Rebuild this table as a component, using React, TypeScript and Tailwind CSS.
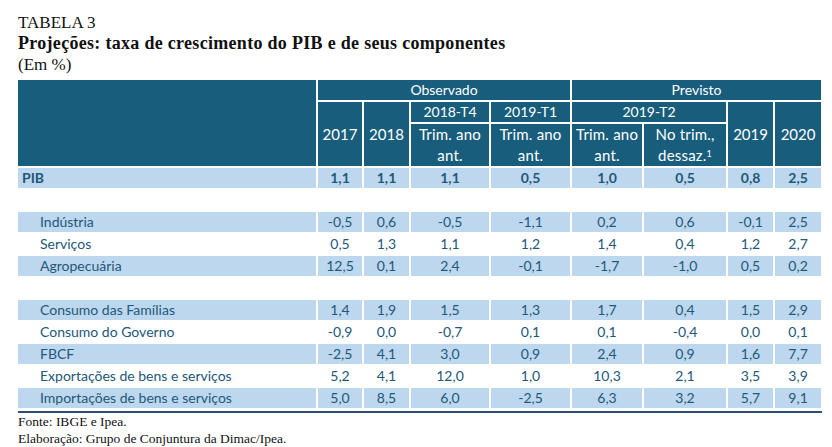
const rows = [
  { label: 'PIB', values: ['1,1', '1,1', '1,1', '0,5', '1,0', '0,5', '0,8', '2,5'], fill: true, bold: true },
  null,
  { label: 'Indústria', values: ['-0,5', '0,6', '-0,5', '-1,1', '0,2', '0,6', '-0,1', '2,5'], fill: true },
  { label: 'Serviços', values: ['0,5', '1,3', '1,1', '1,2', '1,4', '0,4', '1,2', '2,7'], fill: false },
  { label: 'Agropecuária', values: ['12,5', '0,1', '2,4', '-0,1', '-1,7', '-1,0', '0,5', '0,2'], fill: true },
  null,
  { label: 'Consumo das Famílias', values: ['1,4', '1,9', '1,5', '1,3', '1,7', '0,4', '1,5', '2,9'], fill: true },
  { label: 'Consumo do Governo', values: ['-0,9', '0,0', '-0,7', '0,1', '0,1', '-0,4', '0,0', '0,1'], fill: false },
  { label: 'FBCF', values: ['-2,5', '4,1', '3,0', '0,9', '2,4', '0,9', '1,6', '7,7'], fill: true },
  { label: 'Exportações de bens e serviços', values: ['5,2', '4,1', '12,0', '1,0', '10,3', '2,1', '3,5', '3,9'], fill: false },
  { label: 'Importações de bens e serviços', values: ['5,0', '8,5', '6,0', '-2,5', '6,3', '3,2', '5,7', '9,1'], fill: true },
]

const widths = ['w-[298px]', 'w-[44px]', 'w-[45px]', 'w-[78px]', 'w-[79px]', 'w-[70px]', 'w-[82px]', 'w-[45px]', 'w-[46px]']

const head = 'bg-[#195d7c] text-white text-center align-middle p-0 font-normal'

function TwoLine({ top, bottom }: { top: string; bottom: React.ReactNode }) {
  return (
    <>
      <div className="text-[15px] leading-[21px] tracking-[0.2px]">{top}</div>
      <div className="text-[15px] leading-[21px] tracking-[0.2px]">{bottom}</div>
    </>
  )
}

export default function App() {
  return (
    <div className="min-h-[447px] w-[832px] bg-white px-[18px] pt-[12px] font-['Liberation_Serif',serif] text-[#111]">
      <div className="text-[17px] leading-[21px]">TABELA 3</div>
      <div className="text-[18px] font-bold leading-[21px] tracking-[0.3px]">
        Projeções: taxa de crescimento do PIB e de seus componentes
      </div>
      <div className="text-[17px] leading-[21px]">(Em %)</div>

      <table className="-ml-[2px] mt-[3px] w-[807px] table-fixed border-separate border-spacing-[2px] font-['Lato',sans-serif] text-[14px] leading-[20px]">
        <colgroup>
          {widths.map((w, i) => (
            <col key={i} className={w} />
          ))}
        </colgroup>
        <thead className="text-[14px]">
          <tr className="h-[20px]">
            <th rowSpan={3} className={head}></th>
            <th colSpan={4} className={head}>Observado</th>
            <th colSpan={4} className={head}>Previsto</th>
          </tr>
          <tr className="h-[20px]">
            <th rowSpan={2} className={head + ' text-[15px]'}>2017</th>
            <th rowSpan={2} className={head + ' text-[15px]'}>2018</th>
            <th className={head}>2018-T4</th>
            <th className={head}>2019-T1</th>
            <th colSpan={2} className={head}>2019-T2</th>
            <th rowSpan={2} className={head + ' text-[15px]'}>2019</th>
            <th rowSpan={2} className={head + ' text-[15px]'}>2020</th>
          </tr>
          <tr className="h-[42px]">
            <th className={head}>
              <TwoLine top="Trim. ano" bottom="ant." />
            </th>
            <th className={head}>
              <TwoLine top="Trim. ano" bottom="ant." />
            </th>
            <th className={head}>
              <TwoLine top="Trim. ano" bottom="ant." />
            </th>
            <th className={head}>
              <TwoLine
                top="No trim.,"
                bottom={
                  <>
                    dessaz.<sup className="text-[9px]">1</sup>
                  </>
                }
              />
            </th>
          </tr>
        </thead>
        <tbody className="text-[#22587a]">
          {rows.map((r, i) =>
            r === null ? (
              <tr key={i} className="h-[20px]">
                <td colSpan={9} className="p-0"></td>
              </tr>
            ) : (
              <tr key={i} className={'h-[20px] ' + (r.bold ? 'font-bold' : '')}>
                <td className={'p-0 ' + (r.bold ? 'pl-[4px]' : 'pl-[22px]') + (r.fill ? ' bg-[#bdd7ee]' : '')}>
                  {r.label}
                </td>
                {r.values.map((v, j) => (
                  <td key={j} className={'p-0 text-center' + (r.fill ? ' bg-[#bdd7ee]' : '')}>
                    {v}
                  </td>
                ))}
              </tr>
            )
          )}
        </tbody>
      </table>

      <div className="mt-[1px] h-[2px] w-[804px] bg-[#2c4f70]"></div>
      <div className="text-[13.5px] leading-[17px]">Fonte: IBGE e Ipea.</div>
      <div className="text-[13.5px] leading-[17px]">Elaboração: Grupo de Conjuntura da Dimac/Ipea.</div>
    </div>
  )
}
